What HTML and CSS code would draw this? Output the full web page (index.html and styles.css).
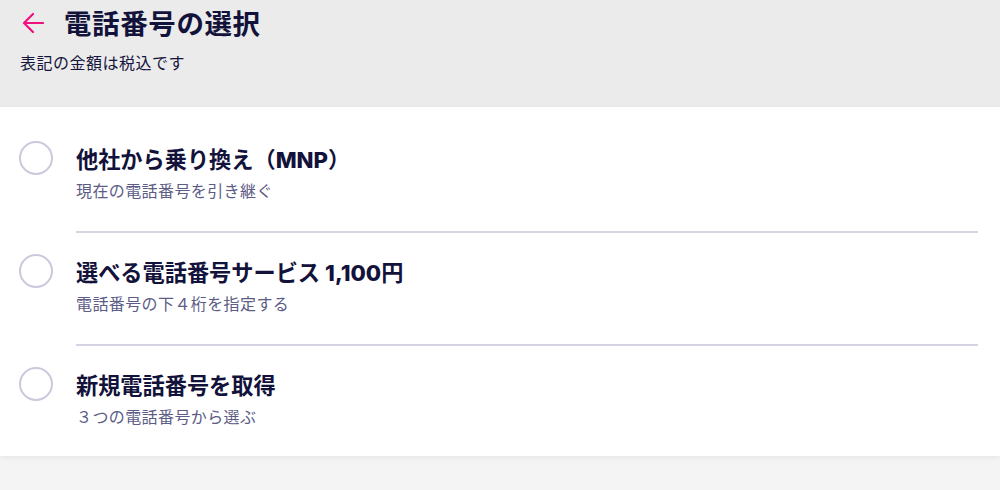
FILE: index.html
```html
<!DOCTYPE html>
<html lang="ja">
<head>
<meta charset="utf-8">
<title>電話番号の選択</title>
<link rel="stylesheet" href="styles.css">
</head>
<body>
<header class="header">
  <div class="header-row">
    <svg class="back" width="22" height="22" viewBox="0 0 22 22" aria-hidden="true">
      <path d="M21 11H2.5M11 2L2 11l9 9" fill="none" stroke="#f0107f" stroke-width="2.2" stroke-linecap="round" stroke-linejoin="round"/>
    </svg>
    <h1 class="title">電話番号の選択</h1>
  </div>
  <p class="note">表記の金額は税込です</p>
</header>
<main class="card">
  <div class="option">
    <span class="radio"></span>
    <div class="option-text">
      <div class="option-title">他社から乗り換え（<span class="latin">MNP</span>）</div>
      <div class="option-sub">現在の電話番号を引き継ぐ</div>
    </div>
  </div>
  <div class="option">
    <span class="radio"></span>
    <div class="option-text">
      <div class="option-title">選べる電話番号サービス <span class="latin">1,100</span>円</div>
      <div class="option-sub">電話番号の下４桁を指定する</div>
    </div>
  </div>
  <div class="option">
    <span class="radio"></span>
    <div class="option-text last">
      <div class="option-title">新規電話番号を取得</div>
      <div class="option-sub">３つの電話番号から選ぶ</div>
    </div>
  </div>
</main>
</body>
</html>
```
FILE: styles.css
```css
html, body {
  margin: 0;
  padding: 0;
}
body {
  width: 1000px;
  height: 490px;
  background: #f4f4f5;
  font-family: "Noto Sans CJK JP", "Noto Sans", sans-serif;
  color: #14143c;
  overflow: hidden;
}
.header {
  background: #ebebeb;
  height: 107px;
  box-sizing: border-box;
  padding-top: 4px;
}
.header-row {
  display: flex;
  align-items: center;
  height: 36px;
  padding-left: 22px;
}
.back {
  display: block;
  margin-right: 20px;
  margin-top: 2px;
}
.title {
  margin: 0;
  font-size: 27.5px;
  font-weight: 700;
  line-height: 36px;
  letter-spacing: 0.6px;
  color: #12123a;
}
.note {
  margin: 10px 0 0 20px;
  font-size: 16px;
  line-height: 24px;
  letter-spacing: 0.5px;
  color: #14143c;
}
.card {
  background: #ffffff;
  padding-top: 13px;
  box-shadow: 0 2px 6px rgba(0, 0, 0, 0.06);
  position: relative;
}
.option {
  display: flex;
  align-items: flex-start;
}
.radio {
  flex: none;
  width: 34px;
  height: 34px;
  box-sizing: border-box;
  border: 2.5px solid #cbc9dc;
  border-radius: 50%;
  margin: 21px 23px 0 19px;
}
.option-text {
  flex: 1;
  margin-right: 22px;
  padding: 23px 0 30px;
  border-bottom: 2px solid #d6d3e4;
}
.option-text.last {
  border-bottom: none;
  padding-bottom: 29px;
}
.option-title {
  font-size: 22.2px;
  font-weight: 700;
  line-height: 30px;
  height: 30px;
  color: #12123a;
}
.latin {
  font-family: "Inter", "Noto Sans", sans-serif;
  font-weight: 800;
  line-height: 1;
}
.option-sub {
  margin-top: 6px;
  height: 22px;
  font-size: 16px;
  line-height: 22px;
  letter-spacing: 0.4px;
  color: #5c5c86;
}
```
